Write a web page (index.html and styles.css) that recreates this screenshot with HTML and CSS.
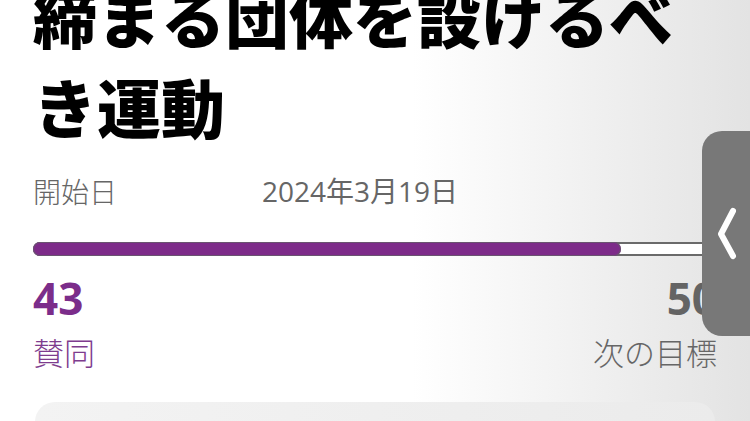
FILE: index.html
```html
<!DOCTYPE html>
<html lang="ja">
<head>
<meta charset="utf-8">
<link rel="stylesheet" href="styles.css">
</head>
<body>
<div class="page">
  <h1 class="title">締まる団体を設けるべき運動</h1>
  <div class="info">
    <span class="label">開始日</span>
    <span class="date">2024年3月19日</span>
  </div>
  <div class="track"><div class="fill" style="width:86%"></div></div>
  <div class="stats">
    <span class="num num-current">43</span>
    <span class="num num-goal">50</span>
    <span class="cap cap-current">賛同</span>
    <span class="cap cap-goal">次の目標</span>
  </div>
  <div class="card"></div>
</div>
<div class="side-tab">
  <svg class="chevron" width="24" height="60" viewBox="0 0 24 60">
    <polyline points="17,8 5,31 17,53" fill="none" stroke="#fff" stroke-width="6" stroke-linecap="round" stroke-linejoin="round"/>
  </svg>
</div>
</body>
</html>
```

FILE: styles.css
```css
html, body {
  margin: 0;
  padding: 0;
}
body {
  width: 750px;
  height: 421px;
  overflow: hidden;
  position: relative;
  background: linear-gradient(to right, #ffffff 0%, #ffffff 55%, #e3e3e3 100%);
  font-family: "Open Sans", "Noto Sans CJK JP", sans-serif;
}
.page {
  padding: 0 33px;
}
.title {
  margin: -30px 0 0;
  font-family: "Noto Sans CJK JP", sans-serif;
  font-weight: 900;
  font-size: 64px;
  line-height: 90px;
  color: #000;
}
.info {
  display: grid;
  grid-template-columns: 229px 1fr;
  margin-top: 21px;
  font-size: 28px;
  line-height: 40px;
  color: #666;
}
.label {
  font-family: "Noto Sans CJK JP", sans-serif;
  font-weight: 300;
}
.track {
  margin-top: 31px;
  height: 14px;
  border-radius: 8px;
  background: #fff;
  box-shadow: inset 0 0 0 2px #6a6a6a;
}
.fill {
  height: 14px;
  background: #7d2b89;
  border-radius: 8px;
  box-shadow: inset 0 0 0 1px #6a5470;
}
.stats {
  display: grid;
  grid-template-columns: 1fr 1fr;
  margin-top: 12px;
}
.num {
  font-weight: 700;
  font-size: 44px;
  line-height: 60px;
}
.num-current { color: #7b2d8a; }
.num-goal { color: #646464; text-align: right; }
.cap {
  font-family: "Noto Sans CJK JP", sans-serif;
  font-weight: 300;
  font-size: 31px;
  line-height: 42px;
  margin-top: 3px;
}
.cap-current { color: #7e3c8e; }
.cap-goal { color: #666; text-align: right; }
.card {
  margin: 29px 2px 0;
  height: 60px;
  border-radius: 20px;
  background: linear-gradient(to right, #f3f3f3, #ebebeb);
}
.side-tab {
  position: absolute;
  left: 702px;
  top: 131px;
  width: 70px;
  height: 205px;
  border-radius: 20px;
  background: #787878;
}
.chevron {
  position: absolute;
  left: 14px;
  top: 72px;
}
```
